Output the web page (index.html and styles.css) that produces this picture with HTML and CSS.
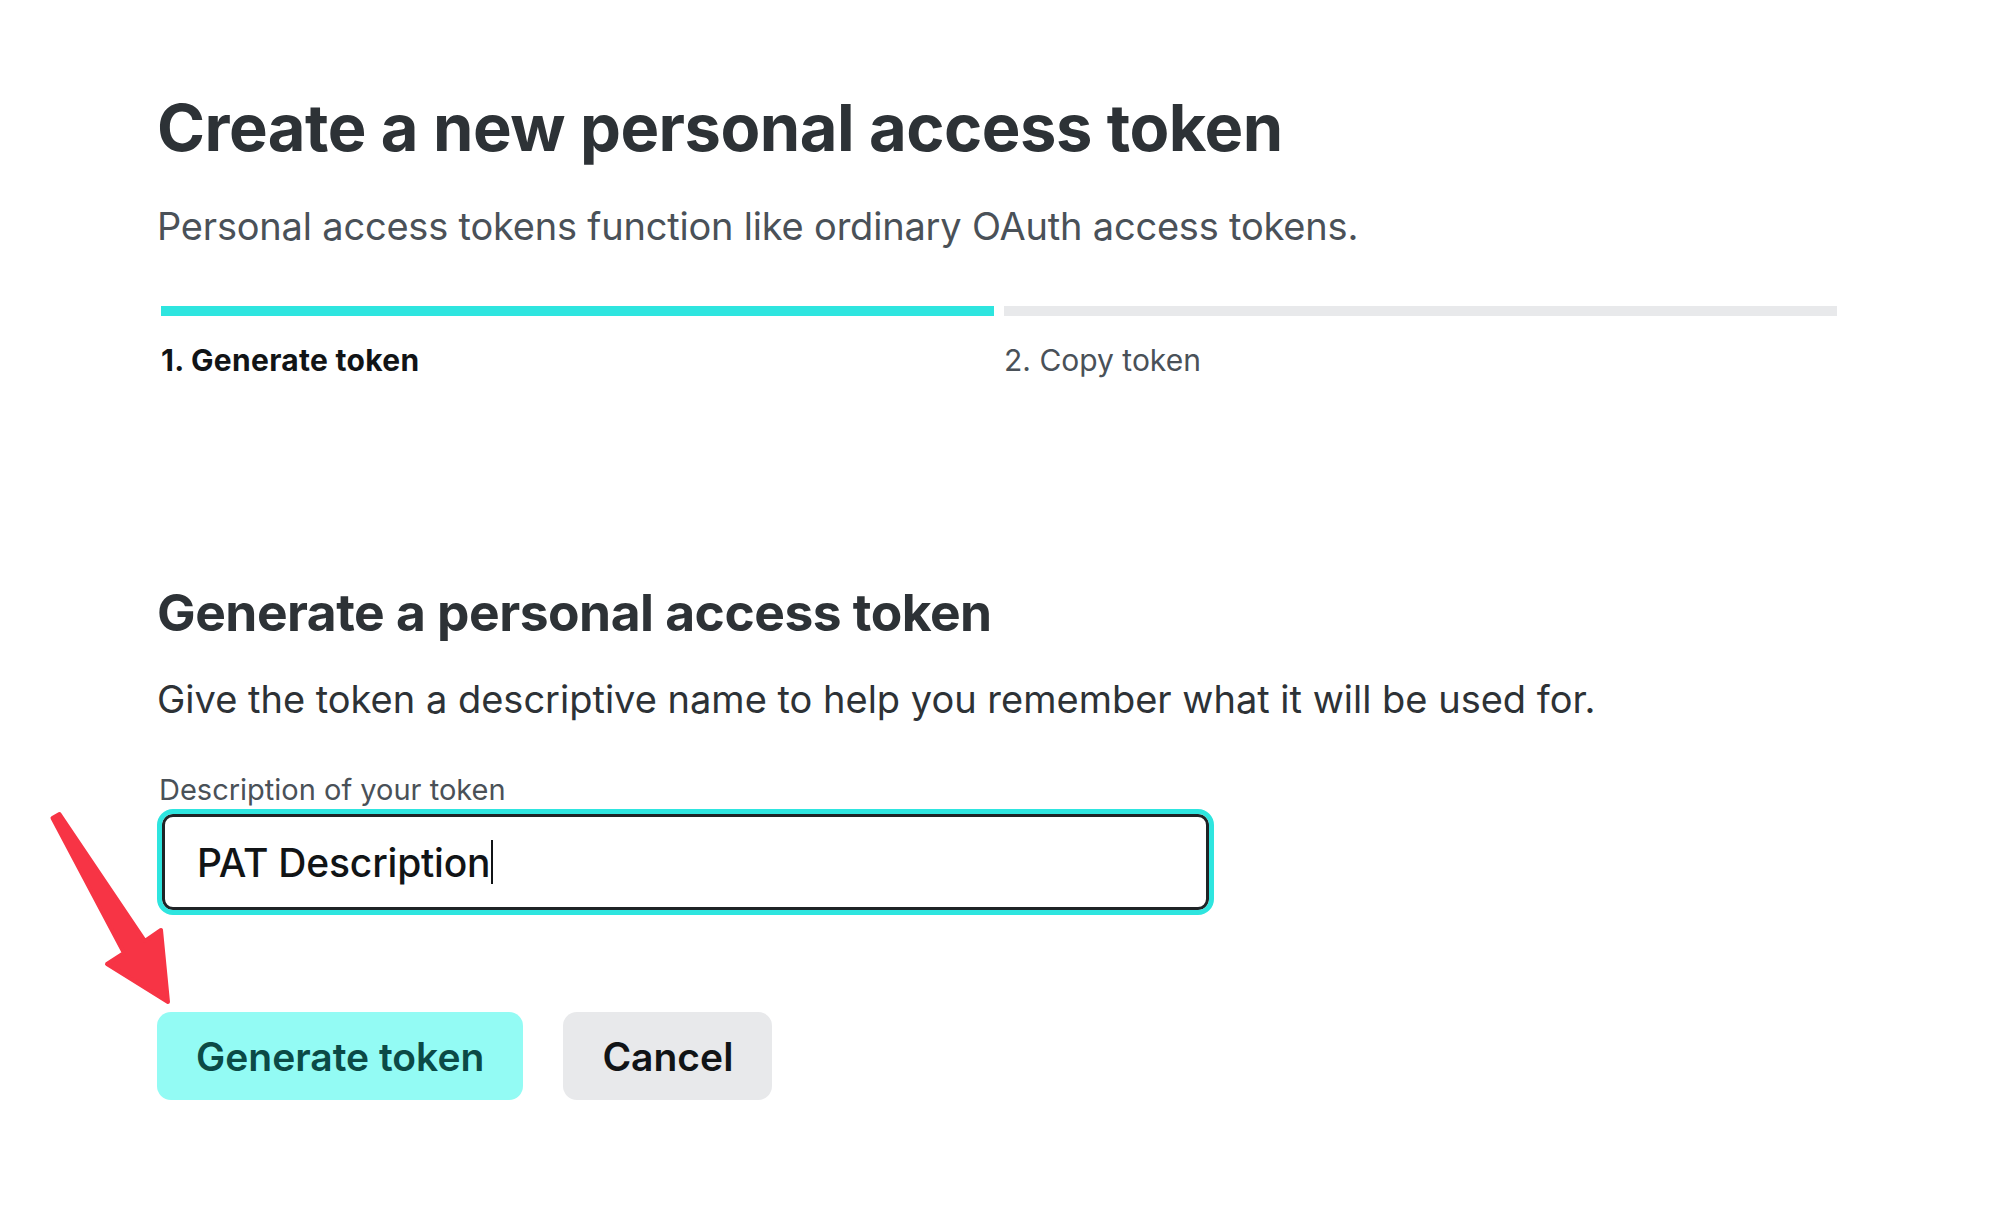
FILE: index.html
```html
<!DOCTYPE html>
<html lang="en">
<head>
<meta charset="utf-8">
<title>Create a new personal access token</title>
<link rel="stylesheet" href="styles.css">
</head>
<body>
<main class="page">
  <header class="intro">
    <h1 class="title">Create a new personal access token</h1>
    <p class="subtitle">Personal access tokens function like ordinary OAuth access tokens.</p>
  </header>

  <ol class="steps">
    <li class="step step-active"><span class="step-bar"></span><span class="step-label">1. Generate token</span></li>
    <li class="step"><span class="step-bar"></span><span class="step-label">2. Copy token</span></li>
  </ol>

  <section class="generate">
    <h2 class="section-title">Generate a personal access token</h2>
    <p class="section-text">Give the token a descriptive name to help you remember what it will be used for.</p>

    <form class="form">
      <label class="field-label" for="desc">Description of your token</label>
      <div class="field-wrap">
        <div class="field" id="desc"><span class="field-value">PAT Description</span><span class="caret"></span></div>
        <svg class="arrow" width="140" height="200" viewBox="30 807 140 200" aria-hidden="true">
          <path d="M55.5 812 L141 939 L157 928 L164 1000 L103 962 L120 951 L48.5 816 Z" fill="#f73445" stroke="#f73445" stroke-width="4" stroke-linejoin="round"/>
        </svg>
      </div>
      <div class="actions">
        <button type="button" class="btn btn-primary">Generate token</button>
        <button type="button" class="btn btn-secondary">Cancel</button>
      </div>
    </form>
  </section>
</main>
</body>
</html>
```
FILE: styles.css
```css
* { box-sizing: border-box; }
html, body { margin: 0; padding: 0; background: #ffffff; }
body {
  font-family: Inter, "Noto Sans", "Liberation Sans", sans-serif;
  color: #2d3236;
  width: 2000px;
  height: 1232px;
  overflow: hidden;
}
.page {
  padding: 88px 0 0 157px;
  width: 1837px;
}
.title {
  margin: 0;
  font-size: 65px;
  font-weight: 700;
  line-height: 80px;
  letter-spacing: -0.5px;
  color: #2d3236;
}
.subtitle {
  margin: 34px 0 0;
  font-size: 38px;
  line-height: 48px;
  color: #4a5158;
  letter-spacing: -0.2px;
}
.steps {
  list-style: none;
  margin: 56px 0 0 4px;
  padding: 0;
  display: grid;
  grid-template-columns: 1fr 1fr;
  column-gap: 10px;
}
.step { display: flex; flex-direction: column; }
.step-bar {
  display: block;
  height: 10px;
  background: #e8e9eb;
}
.step-active .step-bar { background: #2ee5df; }
.step-label {
  margin-top: 26px;
  font-size: 30px;
  line-height: 36px;
  color: #4a5158;
}
.step-active .step-label { color: #111416; font-weight: 700; letter-spacing: 0.3px; }

.generate { margin-top: 201px; }
.section-title {
  margin: 0;
  font-size: 51.5px;
  font-weight: 700;
  line-height: 66px;
  letter-spacing: -0.5px;
  color: #2d3236;
}
.section-text {
  margin: 29px 0 0;
  font-size: 38px;
  line-height: 50px;
  color: #2d3236;
}
.form { margin-top: 49px; display: flex; flex-direction: column; }
.field-label {
  font-size: 29px;
  line-height: 34px;
  color: #4a5158;
  margin-left: 2px;
}
.field-wrap { position: relative; margin-top: 2px; width: 1057px; }
.field {
  height: 106px;
  border: 5px solid #2ee5df;
  border-radius: 16px;
  display: flex;
  align-items: center;
  box-shadow: inset 0 0 0 3px #1f2326;
  padding-left: 35px;
}
.field-value {
  font-size: 39px;
  font-weight: 500;
  color: #111416;
  letter-spacing: -0.2px;
}
.caret {
  display: inline-block;
  width: 2px;
  height: 44px;
  background: #111416;
  margin-left: 1px;
}
.arrow {
  position: absolute;
  left: -123px;
  top: 0;
  overflow: visible;
}
.actions {
  display: flex;
  gap: 40px;
  margin-top: 97px;
}
.btn {
  font-family: inherit;
  border: none;
  border-radius: 14px;
  height: 88px;
  padding: 0 39px;
  font-size: 39px;
  font-weight: 600;
  cursor: pointer;
}
.btn-primary { background: #93fbf4; color: #0b4a46; }
.btn-secondary { background: #e8e9eb; color: #111416; }
```
